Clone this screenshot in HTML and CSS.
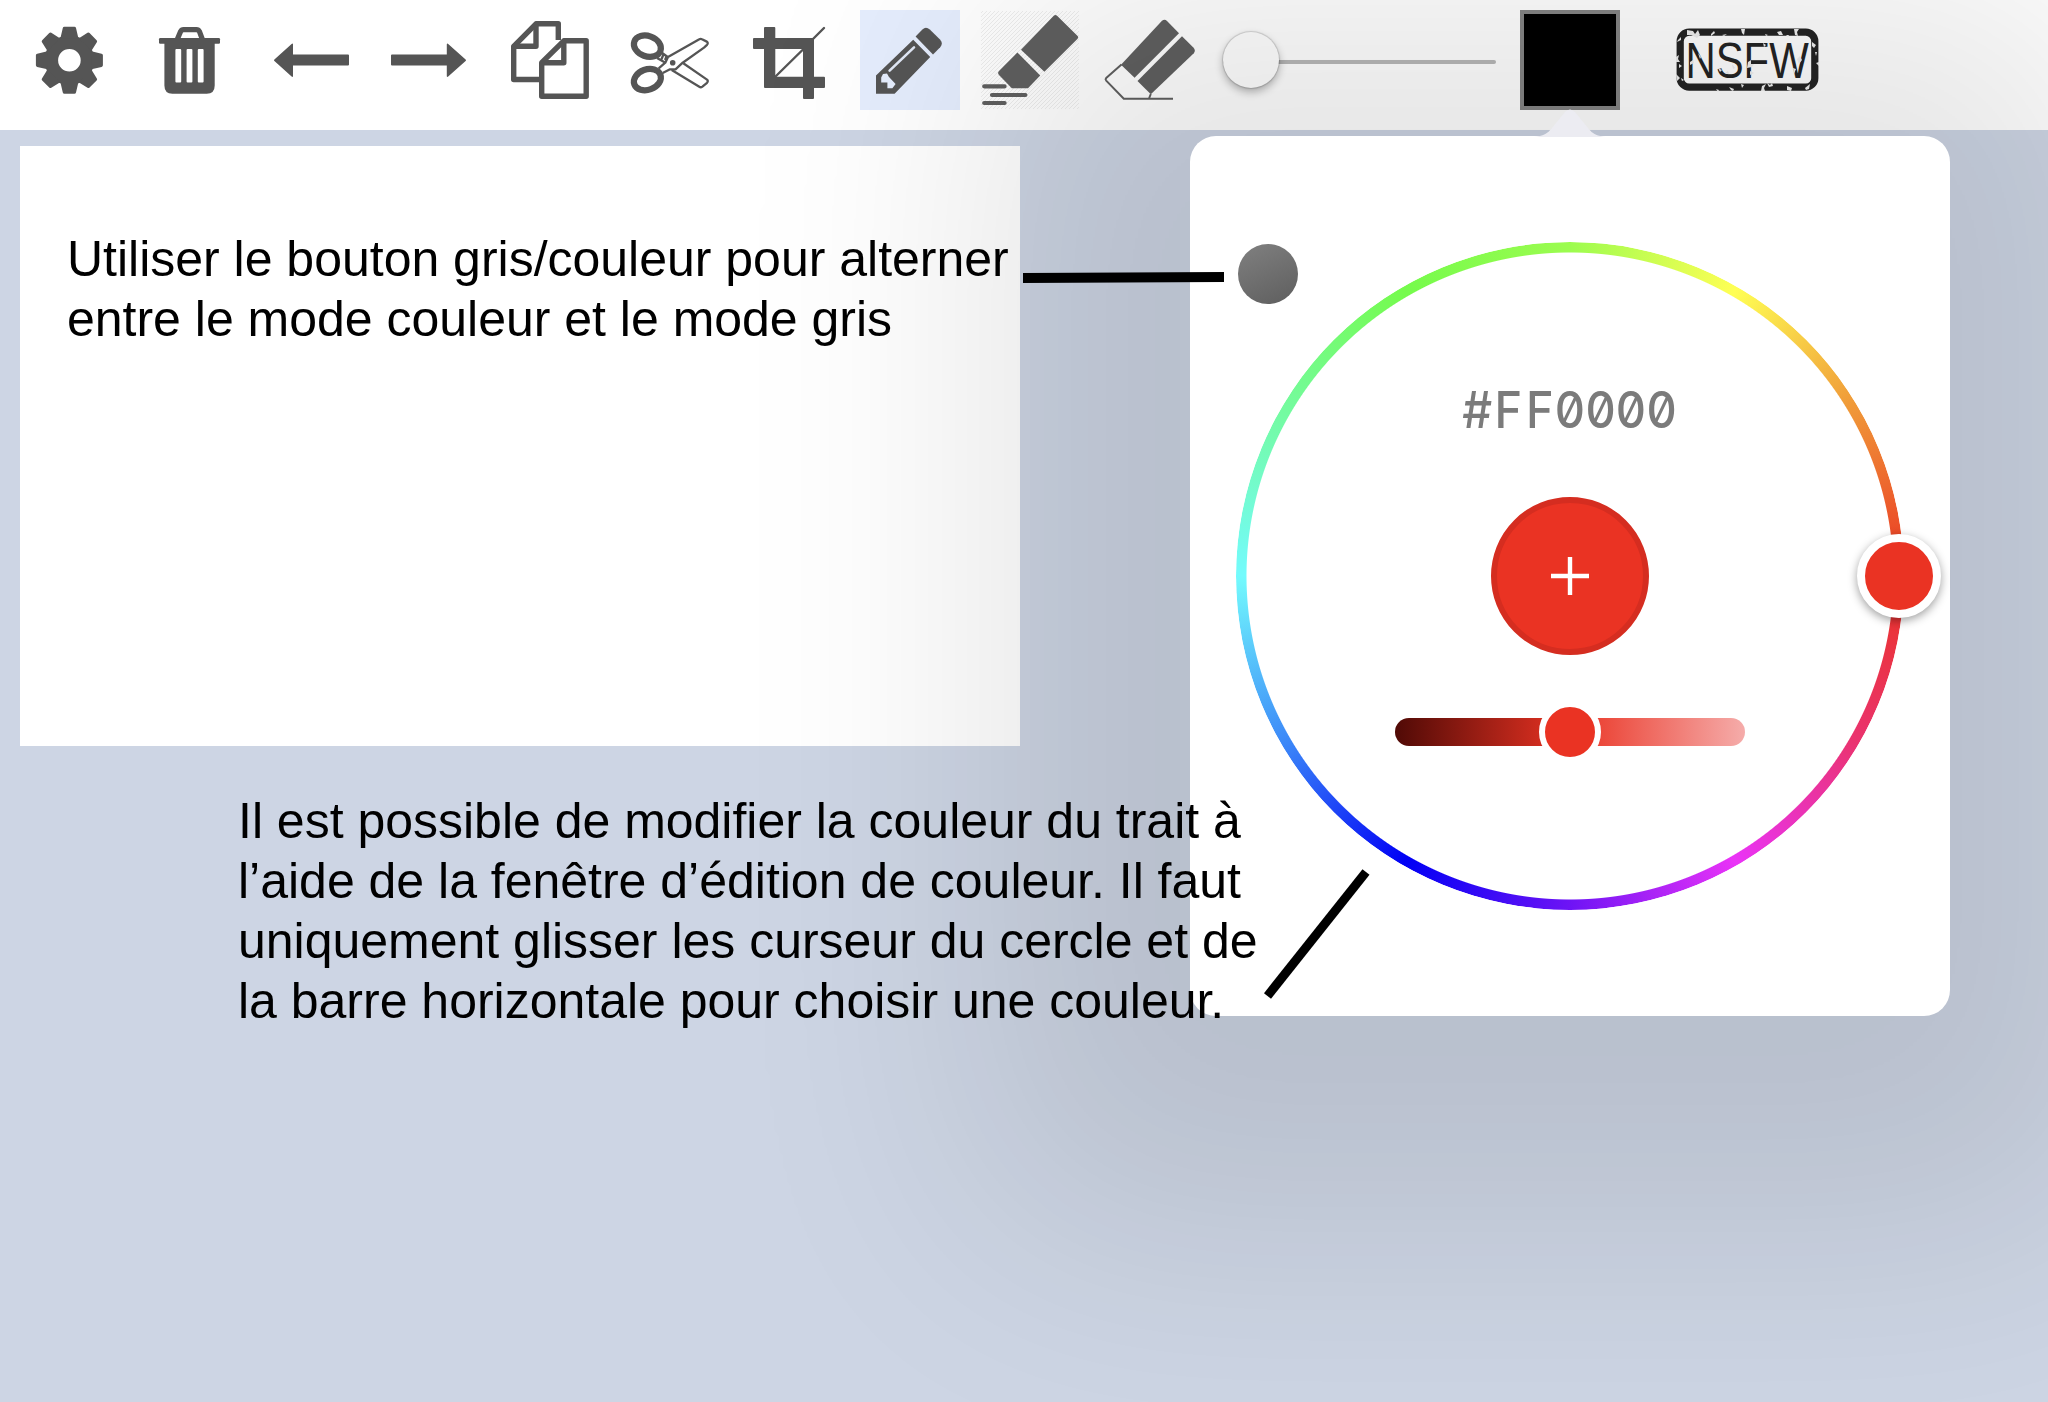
FILE: index.html
```html
<!DOCTYPE html>
<html lang="fr">
<head>
<meta charset="utf-8">
<title>Édition de couleur</title>
<link rel="stylesheet" href="styles.css">
</head>
<body>
<div class="app">
  <header class="toolbar">
    <button class="tool" aria-label="Réglages">
      <svg viewBox="0 0 100 100">
        <defs><path id="tooth" d="M-9-22 L-6.6-32.2 Q-6.3-33.5-5-33.5 H5 Q6.3-33.5 6.6-32.2 L9-22Z"/></defs>
        <g transform="translate(49.4 50.3)">
          <circle r="18" fill="none" stroke="#555" stroke-width="13.4"/>
          <use href="#tooth"/><use href="#tooth" transform="rotate(45)"/><use href="#tooth" transform="rotate(90)"/><use href="#tooth" transform="rotate(135)"/>
          <use href="#tooth" transform="rotate(180)"/><use href="#tooth" transform="rotate(225)"/><use href="#tooth" transform="rotate(270)"/><use href="#tooth" transform="rotate(315)"/>
        </g>
      </svg>
    </button>
    <button class="tool" aria-label="Supprimer">
      <svg viewBox="0 0 100 100">
        <path d="M37 30 L40.6 21.4 Q41.6 19.6 43.5 19.6 H56.5 Q58.4 19.6 59.4 21.4 L62.6 30" fill="none" stroke="#555" stroke-width="5.2"/>
        <rect x="19" y="28" width="61" height="5.7" rx="1.2"/>
        <path fill-rule="evenodd" d="M24.4 32 H74.7 V75.5 Q74.7 83.7 66.7 83.7 H32.4 Q24.4 83.7 24.4 75.5Z M36.4 39 q-1 0-1 1 V71.4 q0 1 1 1 h3.8 q1 0 1-1 V40 q0-1-1-1z M47.6 39 q-1 0-1 1 V71.4 q0 1 1 1 h3.8 q1 0 1-1 V40 q0-1-1-1z M58.8 39 q-1 0-1 1 V71.4 q0 1 1 1 h3.8 q1 0 1-1 V40 q0-1-1-1z"/>
      </svg>
    </button>
    <button class="tool" aria-label="Annuler">
      <svg viewBox="0 0 100 100"><path d="M14.4 49.6 L31.6 33.9 Q33 33 33 34.6 V44.5 H88 Q89 44.5 89 45.5 V54.5 Q89 55.5 88 55.5 H33 V66 Q33 67.6 31.6 66.6 L14.4 51 Q13.4 50.3 14.4 49.6Z"/></svg>
    </button>
    <button class="tool" aria-label="Rétablir">
      <svg viewBox="0 0 100 100"><path d="M85.6 49.6 L68.2 33.9 Q66.8 33 66.8 34.6 V44.5 H12 Q11 44.5 11 45.5 V54.5 Q11 55.5 12 55.5 H66.8 V66 Q66.8 67.6 68.2 66.6 L85.6 51 Q86.6 50.3 85.6 49.6Z"/></svg>
    </button>
    <button class="tool" aria-label="Copier">
      <svg viewBox="0 0 100 100">
        <g fill="none" stroke="#555" stroke-width="5.4" stroke-linejoin="round">
          <path d="M41.5 69.5 H13.7 V36.3 L36 13.8 H58.3 V30"/>
          <path d="M36 14 V36.3 H14"/>
          <path d="M41.7 52.7 L63.8 30.8 H86.2 V86.2 H41.7Z"/>
          <path d="M63.8 31 V52.7 H42"/>
        </g>
      </svg>
    </button>
    <button class="tool" aria-label="Couper">
      <svg viewBox="0 0 100 100">
        <g fill="none" stroke="#555" stroke-width="6.2">
          <ellipse cx="27.4" cy="36.2" rx="13.9" ry="10.2" transform="rotate(20 27.4 36.2)"/>
          <ellipse cx="27.4" cy="69.6" rx="13.9" ry="10.2" transform="rotate(-20 27.4 69.6)"/>
        </g>
        <g fill="none" stroke="#555" stroke-width="2.3" stroke-linejoin="round">
          <path d="M38.7 58.3 L45.3 52.7 L48 47 L79.3 29.2 Q80.6 28.4 82 29.2 L86.8 31.6 Q88.6 33 87 34.8 L84 37.6 L62.7 52.7 L55.5 59.3 H50 L42.7 63"/>
          <path d="M63.3 53.3 L87 69.6 Q88.6 71 87 72.8 L82.4 76.6 Q80.8 77.8 79.3 76.8 L51.7 60"/>
          <path d="M41.5 42.5 L48 47.3 M37 48 L45.5 52.8 M43.4 44.5 L41.4 49.5 M45 50 L46.5 46.5"/>
        </g>
        <circle cx="52.7" cy="52.8" r="2.8"/>
      </svg>
    </button>
    <button class="tool" aria-label="Recadrer">
      <svg viewBox="0 0 100 100">
        <path fill-rule="evenodd" d="M25 17 H34.3 Q35.3 17 35.3 18 V28 H74 V66.8 H84 Q85 66.8 85 67.8 V77 Q85 78 84 78 H74 V88 Q74 89 73 89 H64 Q63 89 63 88 V78 H25 Q24 78 24 77 V39 H14 Q13 39 13 38 V29 Q13 28 14 28 H24 V18 Q24 17 25 17Z M35.3 39 V66.8 H63 V39Z"/>
        <path d="M35.5 66.5 L63 39.5 M73 29 L84 18" stroke="#555" stroke-width="2.4" stroke-linecap="round"/>
      </svg>
    </button>
    <button class="tool tool-selected" aria-label="Crayon">
      <svg viewBox="0 0 100 100">
        <path d="M55.6 26.6 L62.4 19.4 Q66 16 69.8 19.6 L80 29.6 Q83.6 33.4 80.2 37.2 L73 44.6Z"/>
        <path fill-rule="evenodd" d="M53.2 29.8 L70.2 47 L34.6 83.7 H16 V65.6Z M23 64 L21.2 67.6 V72.6 H27.4 V78.2 H32.4 L35.6 74 L28.8 66.8 L27 63.6Z"/>
        <path d="M29.6 60.6 L54 37.4" stroke="#e2e9f7" stroke-width="2.6" stroke-linecap="round"/>
      </svg>
    </button>
    <button class="tool tool-soft" aria-label="Surligneur">
      <svg viewBox="0 0 100 100">
        <defs><pattern id="hatch" width="4" height="4" patternUnits="userSpaceOnUse"><path d="M0 4 L4 0" stroke="#e6e6e6" stroke-width=".7"/></pattern></defs>
        <rect x="1" y="1" width="98" height="98" fill="url(#hatch)"/>
        <path d="M74 5.6 Q75.4 4.2 76.8 5.6 L97.6 26 Q99 27.3 97.6 28.7 L64.4 61.8 L41 39.7Z"/>
        <path d="M37.4 42.6 L60.2 65.5 L48 78.3 H31.8 L19 65 Q17.2 63 19 61Z"/>
        <path d="M4.2 76.3 H24.6 M12 85 H45.4 M4.2 93 H24.6" stroke="#606060" stroke-width="4.2" stroke-linecap="round"/>
      </svg>
    </button>
    <button class="tool tool-soft" aria-label="Gomme">
      <svg viewBox="0 0 100 100">
        <path d="M62 10.8 Q64.6 8.6 67 11 L79 23.3 L34.6 67.8 L21 54.8Z"/>
        <path d="M82 26.2 L93.6 37.8 Q96 40.6 93.8 43.2 L50.8 84.3 L37.5 71Z"/>
        <path d="M21.5 54.5 L6.2 68 Q5 69.3 6.2 70.6 L23.8 88.8 H73 M50.8 84 L49 88.5" fill="none" stroke="#606060" stroke-width="2"/>
      </svg>
    </button>
    <div class="size-slider"><div class="size-track"></div><div class="size-thumb"></div></div>
    <div class="swatch"></div>
    <svg class="stamp" viewBox="0 0 144 64">
      <rect x="4.2" y="4.2" width="134.6" height="55" rx="9" fill="none" stroke="#242424" stroke-width="7.2"/>
      <text class="stamp-text" transform="translate(9.4 49.6) scale(.838 1)">NSFW</text>
      <g fill="#eee">
        <path d="M11 2l6 1 2 3 3-4 2 5-3 3-6-3-4 0zM35 6l3-3 1 2-4 3zM46 7l5-1-3 2zM65 1l4 0-1 6-2-2zM89 6l3 1-2 1zM101 4l4-1 2 4-4 0zM110 7l3 0-1 2zM118 1l5 0-2 3 1 4-3-1z"/>
        <path d="M2 12l3-3 0 3-4 2zM0 29l3-2-1 4 2 3-4 0zM3 36l3 2-3 2zM0 46l4 4-3 3zM5 50l3 2-2 1zM136 14l4 3-2 3-2-2zM139 24l2 0-1 4zM140 35l3-1 0 4z"/>
        <path d="M40 61l3 1-1 2zM53 59l5 2-1 2-2-1zM65 56l3 1-2 3zM85 63l1-5 4-2-2 4 1 3zM91 55l3 2 2-2 1 3-4 1zM111 58l5 2-1 3-4-1zM129 60l5-4-1 5-3 1z"/>
        <path d="M14 34l3-2 1 3-4 2zM22 25l3 4-1 2zM42 40l4 2-2 2zM49 45l3-2 1 3zM56 36l3 4-2 1zM72 34l3-2 0 4 3 0-2 3-5 1zM74 43l4 2-4 2zM87 15l3 2-2 2zM121 31l3-3 2 4-3 4zM117 40l3 1-2 5z"/>
      </g>
    </svg>
  </header>

  <main class="workspace">
    <section class="canvas"></section>
  </main>

  <section class="popover">
    <svg class="popover-arrow" viewBox="0 0 72 28"><path d="M0 28 C14 27 17 20 22 14 L31 3 Q36 -2 41 3 L50 14 C55 20 58 27 72 28Z"/></svg>
    <div class="gray-toggle"></div>
    <div class="wheel">
      <div class="wheel-ring"></div>
      <svg class="hex" viewBox="-40 0 300 60"><text class="hex-text" transform="scale(.92 1)" y="47" x="2.5 37.5 71.7 103 136.4 169.2 202.7">#FF0000</text></svg>
      <div class="add"><svg viewBox="0 0 40 40"><path d="M1 20 H39 M20 1 V39"/></svg></div>
      <div class="shade"><div class="shade-thumb"></div></div>
      <div class="wheel-handle"></div>
    </div>
  </section>

  <p class="note note-gray">Utiliser le bouton gris/couleur pour alterner<br>entre le mode couleur et le mode gris</p>
  <p class="note note-color">Il est possible de modifier la couleur du trait à<br>l’aide de la fenêtre d’édition de couleur. Il faut<br>uniquement glisser les curseur du cercle et de<br>la barre horizontale pour choisir une couleur.</p>
  <svg class="pointers" viewBox="0 0 2048 1402"><path stroke-width="10" d="M1023 278 L1224 277"/><path stroke-width="9" d="M1366 872 L1267.5 996"/></svg>
</div>
</body>
</html>
```

FILE: styles.css
```css
* { box-sizing: border-box; }

body {
  margin: 0;
  font-family: "Liberation Sans", Arial, sans-serif;
}

.app {
  position: relative;
  width: 2048px;
  height: 1402px;
  overflow: hidden;
  display: flex;
  flex-direction: column;
  background: #cdd5e4;
}

.toolbar {
  height: 130px;
  flex: none;
  display: flex;
  gap: 20px;
  padding: 10px 20px;
  background: #fff;
}

.tool {
  width: 100px;
  height: 100px;
  flex: none;
  padding: 0;
  border: 0;
  background: none;
  fill: #555;
}

.tool svg { display: block; width: 100px; height: 100px; }
.tool-selected { background: #e5edfd; }
.tool-soft { fill: #606060; }

.size-slider {
  position: relative;
  width: 273px;
  height: 100px;
  margin-left: 3px;
  flex: none;
  display: flex;
  align-items: center;
}

.size-track {
  width: 100%;
  height: 4px;
  margin-top: 3px;
  border-radius: 2px;
  background: #b8b8b8;
}

.size-thumb {
  position: absolute;
  left: 0;
  top: 22px;
  width: 56px;
  height: 56px;
  border-radius: 50%;
  background: #fff;
  box-shadow: 0 0 1px 1px rgba(0, 0, 0, .14), 0 4px 8px rgba(0, 0, 0, .3);
}

.swatch {
  width: 100px;
  height: 100px;
  margin-left: 4px;
  flex: none;
  border: 4px solid #858585;
  background: #000;
}

.stamp {
  width: 144px;
  height: 64px;
  margin: 18px 0 0 36px;
  flex: none;
  overflow: visible;
}

.stamp-text { font-size: 50px; fill: #242424; }

.workspace { flex: 1; padding: 16px 20px; }

.canvas { width: 1000px; height: 600px; background: #fff; }

.popover {
  position: absolute;
  left: 1190px;
  top: 136px;
  width: 760px;
  height: 880px;
  border-radius: 26px;
  background: #fff;
  box-shadow: -25px 30px 390px 185px rgba(0, 0, 0, .1);
}

.popover-arrow {
  position: absolute;
  left: 344px;
  top: -27px;
  width: 72px;
  height: 28px;
  fill: #ececf2;
}

.gray-toggle {
  position: absolute;
  left: 48px;
  top: 108px;
  width: 60px;
  height: 60px;
  border-radius: 50%;
  background: linear-gradient(155deg, #808080, #5e5e5e);
}

.wheel {
  position: relative;
  width: 668px;
  height: 668px;
  margin: 106px auto 0;
  display: flex;
  flex-direction: column;
  align-items: center;
}

.wheel-ring {
  position: absolute;
  inset: 0;
  border-radius: 50%;
  background: conic-gradient(#9cfc4f, #ffff54 30deg, #f09c39 58deg, #ea3323 90deg, #ea336f 120deg, #ea33f7 150deg, #6e14f5 180deg, #0000f5 210deg, #3c89f8 240deg, #73fbfd 270deg, #74fba0 300deg, #75fb4c 330deg, #9cfc4f);
  -webkit-mask: radial-gradient(circle closest-side, transparent 323px, #000 324px);
  mask: radial-gradient(circle closest-side, transparent 323px, #000 324px);
}

.hex { width: 300px; height: 60px; margin-top: 139px; overflow: visible; transform: translateX(20px); }

.hex-text {
  font-family: Inter, sans-serif;
  font-size: 51px;
  font-weight: 500;
  font-feature-settings: "zero";
  fill: #7b7b7b;
}

.hex { transform: none; margin-right: 0; }

.add {
  width: 158px;
  height: 158px;
  margin-top: 56px;
  border: 6px solid #d52d20;
  border-radius: 50%;
  background: #ea3323;
  display: grid;
  place-items: center;
}

.add svg { width: 40px; height: 40px; stroke: #fff; stroke-width: 4.4; }

.shade {
  width: 350px;
  height: 28px;
  margin-top: 63px;
  border-radius: 14px;
  background: linear-gradient(90deg, #500a06, #ea3323 50%, #f5acaa);
  display: flex;
  justify-content: center;
  align-items: center;
}

.shade-thumb {
  width: 62px;
  height: 62px;
  flex: none;
  border: 6px solid #fff;
  border-radius: 50%;
  background: #ea3323;
}

.wheel-handle {
  position: absolute;
  right: -37px;
  top: 292px;
  width: 84px;
  height: 84px;
  border: 8px solid #fff;
  border-radius: 50%;
  background: #ea3323;
  box-shadow: 0 3px 10px rgba(0, 0, 0, .38);
}

.note {
  position: absolute;
  margin: 0;
  font-size: 50px;
  line-height: 60px;
  letter-spacing: -.01px;
  white-space: nowrap;
  color: #000;
}

.note-gray { left: 67px; top: 229px; }
.note-color { left: 238px; top: 791px; }

.pointers {
  position: absolute;
  inset: 0;
  width: 2048px;
  height: 1402px;
  stroke: #000;
  pointer-events: none;
}
```
